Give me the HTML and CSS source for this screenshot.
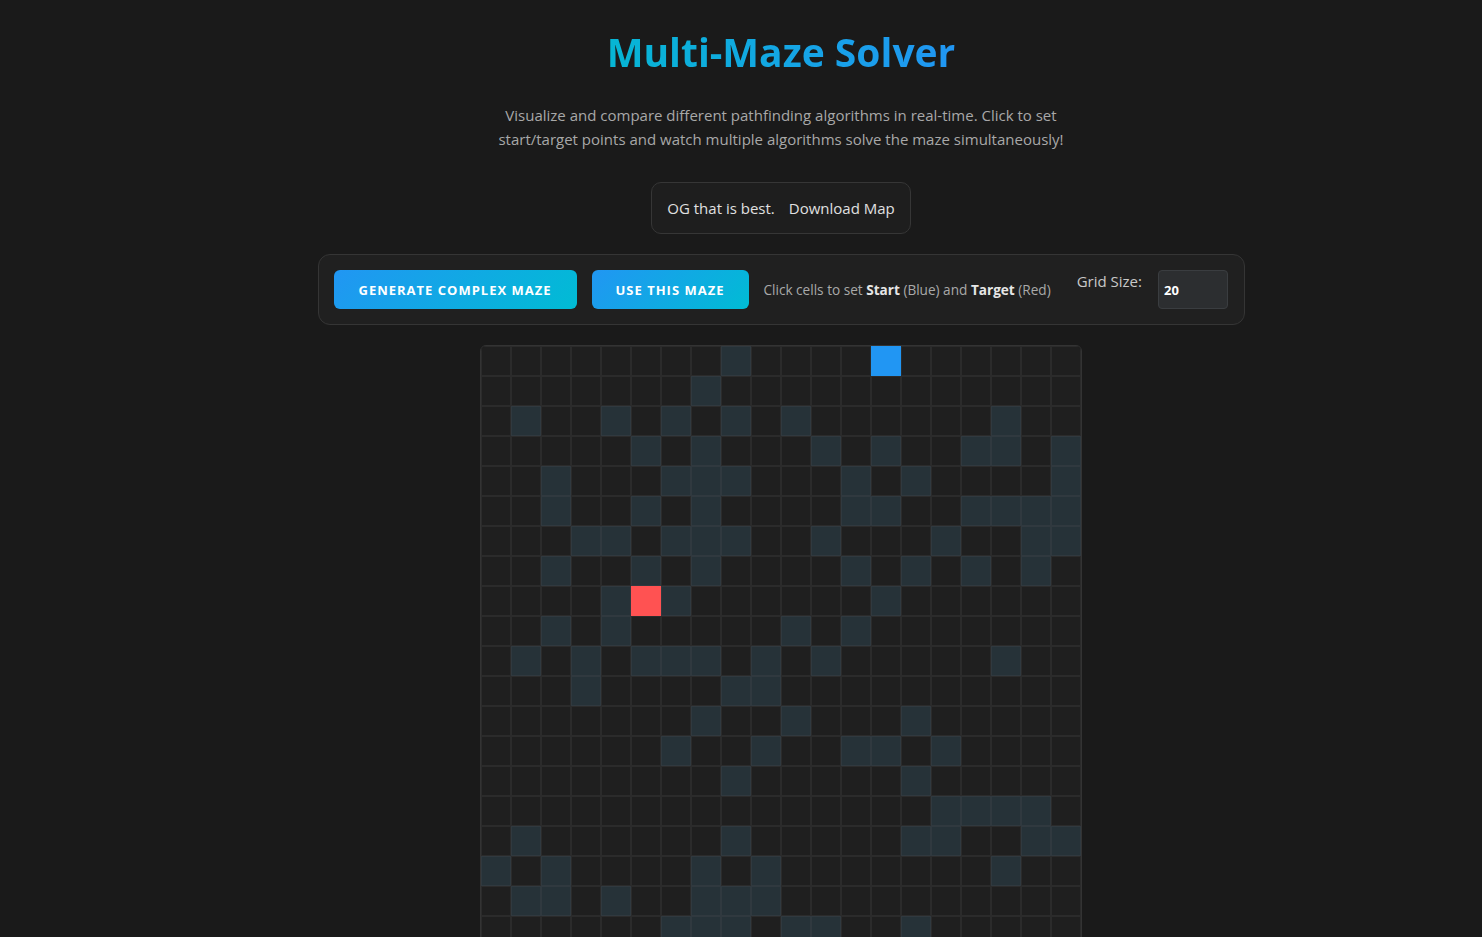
FILE: index.html
```html
<!DOCTYPE html>
<html lang="en">
<head>
<meta charset="utf-8">
<title>Multi-Maze Solver</title>
<link rel="stylesheet" href="styles.css">
</head>
<body>
<div class="page">
  <h1 class="title">Multi-Maze Solver</h1>
  <p class="subtitle">Visualize and compare different pathfinding algorithms in real-time. Click to set start/target points and watch multiple algorithms solve the maze simultaneously!</p>
  <div class="links">
    <a class="link">OG that is best.</a>
    <a class="link">Download Map</a>
  </div>
  <div class="controls">
    <button class="btn btn-wide">GENERATE COMPLEX MAZE</button>
    <button class="btn">USE THIS MAZE</button>
    <span class="hint">Click cells to set <b>Start</b> (Blue) and <b>Target</b> (Red)</span>
    <label class="size-label">Grid Size:</label>
    <input class="size-input" type="text" value="20">
  </div>
  <div class="grid" id="grid"></div>
</div>
<script src="script.js"></script>
</body>
</html>
```

FILE: styles.css
```css
* { box-sizing: border-box; }
html, body { margin: 0; padding: 0; }
body {
  background: #1a1a1a;
  color: #ddd;
  font-family: "Open Sans", "Noto Sans", sans-serif;
  overflow: hidden;
  height: 937px;
}
.page {
  display: flex;
  flex-direction: column;
  align-items: center;
  padding-left: 80px;
  padding-top: 26px;
}
.title {
  margin: 0;
  font-size: 39px;
  line-height: 52px;
  font-weight: 700;
  background: linear-gradient(90deg, #06b6d4, #2196f3);
  -webkit-background-clip: text;
  background-clip: text;
  color: transparent;
}
.subtitle {
  margin: 25px 0 0;
  max-width: 600px;
  text-align: center;
  font-size: 15px;
  line-height: 24px;
  color: #a8a8a8;
}
.links {
  margin-top: 31px;
  display: flex;
  gap: 14px;
  align-items: center;
  height: 52px;
  padding: 0 15px;
  border: 1px solid #363636;
  border-radius: 10px;
  background: #1e1e1e;
}
.link {
  font-size: 15px;
  color: #e0e0e0;
}
.controls {
  margin-top: 20px;
  width: 927px;
  height: 71px;
  display: flex;
  align-items: center;
  padding: 0 15px;
  border: 1px solid #353535;
  border-radius: 12px;
  background: #202020;
}
.btn {
  height: 39px;
  border: none;
  border-radius: 6px;
  background: linear-gradient(135deg, #2196f3, #00bcd4);
  color: #fff;
  font-family: "Open Sans", sans-serif;
  font-weight: 700;
  font-size: 13px;
  letter-spacing: 1px;
  padding: 0 24px;
  margin-right: 15px;
}
.btn-wide { width: 243px; }
.hint {
  font-size: 13.6px;
  color: #a9a9a9;
}
.hint b { color: #e6e6e6; }
.size-label {
  margin-left: 26px;
  font-size: 15px;
  color: #c8c8c8;
  align-self: flex-start;
  margin-top: 16px;
}
.size-input {
  margin-left: 16px;
  width: 70px;
  height: 39px;
  background: #2c2e30;
  border: 1px solid #3a3d40;
  border-radius: 4px;
  color: #fff;
  font-family: "Open Sans", sans-serif;
  font-weight: 700;
  font-size: 13px;
  padding: 0 5px;
}
.grid {
  margin-top: 20px;
  display: grid;
  grid-template-columns: repeat(20, 30px);
  grid-auto-rows: 30px;
  border: 1px solid #333;
  border-radius: 6px;
  overflow: hidden;
  background: #1f1f1f;
}
.cell {
  border: 1px solid #2b2b2b;
  background: #1f1f1f;
}
.cell.wall {
  background: #263238;
  border-color: #30393f;
}
.cell.start { background: #2196f3; border-color: #2196f3; }
.cell.target { background: #ff5252; border-color: #ff5252; }
```

FILE: script.js
```js
(function () {
  var walls = {
    0: [8], 1: [7], 2: [1, 4, 6, 8, 10, 17], 3: [5, 7, 11, 13, 16, 17, 19],
    4: [2, 6, 7, 8, 12, 14, 19], 5: [2, 5, 7, 12, 13, 16, 17, 18, 19],
    6: [3, 4, 6, 7, 8, 11, 15, 18, 19], 7: [2, 5, 7, 12, 14, 16, 18],
    8: [4, 6, 13], 9: [2, 4, 10, 12], 10: [1, 3, 5, 6, 7, 9, 11, 17],
    11: [3, 8, 9], 12: [7, 10, 14], 13: [6, 9, 12, 13, 15], 14: [8, 14],
    15: [15, 16, 17, 18], 16: [1, 8, 14, 15, 18, 19], 17: [0, 2, 7, 9, 17],
    18: [1, 2, 4, 7, 8, 9], 19: [6, 7, 8, 10, 11, 14]
  };
  var grid = document.getElementById('grid');
  for (var r = 0; r < 20; r++) {
    for (var c = 0; c < 20; c++) {
      var d = document.createElement('div');
      d.className = 'cell';
      if (walls[r] && walls[r].indexOf(c) !== -1) d.className += ' wall';
      if (r === 0 && c === 13) d.className += ' start';
      if (r === 8 && c === 5) d.className += ' target';
      grid.appendChild(d);
    }
  }
})();
```
